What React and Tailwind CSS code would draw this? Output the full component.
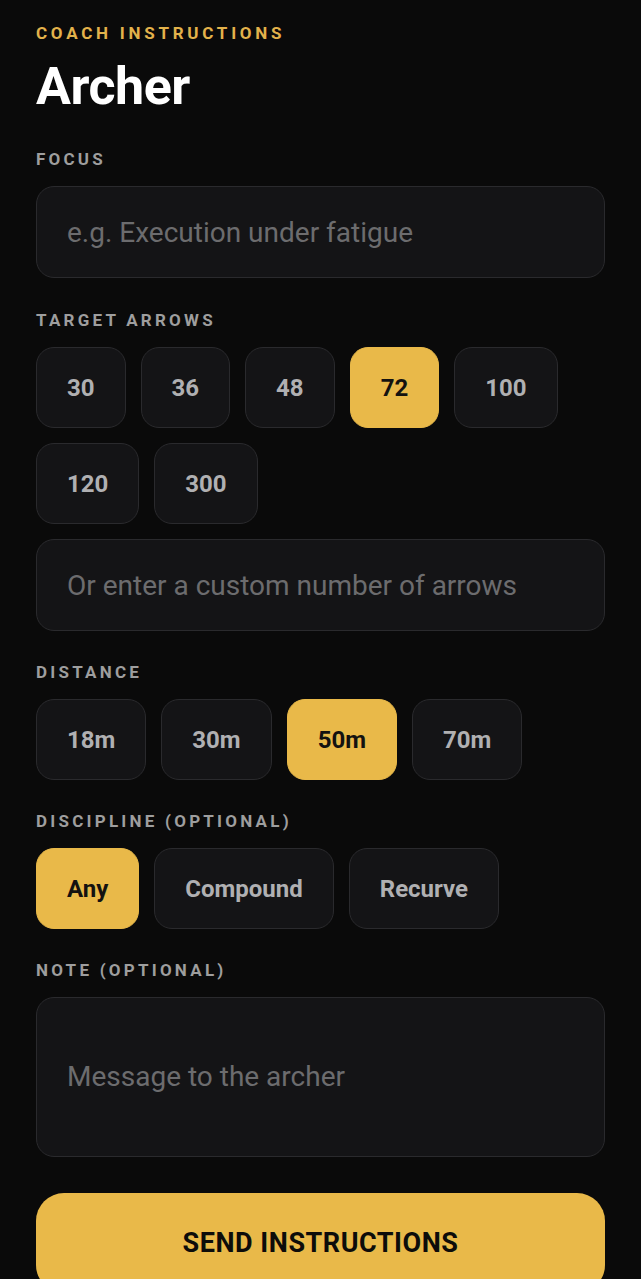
import React, { useState } from 'react';

const ARROWS = ['30', '36', '48', '72', '100', '120', '300'];
const DISTANCES = ['18m', '30m', '50m', '70m'];
const DISCIPLINES = ['Any', 'Compound', 'Recurve'];

const Label = ({ children }) => (
  <div className="text-[17px] leading-none font-bold tracking-[0.19em] text-[#9e9e9e] mb-[18px]">
    {children}
  </div>
);

const Chip = ({ active, children, onClick }) => (
  <button
    type="button"
    onClick={onClick}
    className={
      active
        ? 'h-[81px] px-[30px] rounded-[18px] border border-[#e9b949] bg-[#e9b949] text-[24px] font-bold text-[#141210]'
        : 'h-[81px] px-[30px] rounded-[18px] border border-[#2a2a2d] bg-[#141416] text-[24px] font-bold text-[#b0b0b2]'
    }
  >
    {children}
  </button>
);

const inputClass =
  'w-full h-[92px] rounded-[18px] border border-[#2a2a2d] bg-[#141416] px-[30px] text-[28px] text-[#e5e5e5] placeholder:text-[#6c6c6e] outline-none';

export default function App() {
  const [arrows, setArrows] = useState('72');
  const [distance, setDistance] = useState('50m');
  const [discipline, setDiscipline] = useState('Any');

  return (
    <div
      className="min-h-screen bg-[#0a0a0a] px-[36px] pt-[25px] pb-10"
      style={{ fontFamily: 'Roboto, "Noto Sans", sans-serif' }}
    >
      <div className="text-[17px] leading-none font-bold tracking-[0.22em] text-[#e3b24b]">
        COACH INSTRUCTIONS
      </div>
      <h1 className="mt-[19px] text-[52px] leading-none font-bold text-white tracking-[-0.01em]">
        Archer
      </h1>

      {/* Focus */}
      <div className="mt-[38px]">
        <Label>FOCUS</Label>
        <input className={inputClass} placeholder="e.g. Execution under fatigue" />
      </div>

      {/* Target arrows */}
      <div className="mt-[34px]">
        <Label>TARGET ARROWS</Label>
        <div className="flex flex-wrap gap-[15px]">
          {ARROWS.map((a) => (
            <Chip key={a} active={arrows === a} onClick={() => setArrows(a)}>
              {a}
            </Chip>
          ))}
        </div>
        <input
          className={inputClass + ' mt-[15px]'}
          placeholder="Or enter a custom number of arrows"
        />
      </div>

      {/* Distance */}
      <div className="mt-[33px]">
        <Label>DISTANCE</Label>
        <div className="flex flex-wrap gap-[15px]">
          {DISTANCES.map((d) => (
            <Chip key={d} active={distance === d} onClick={() => setDistance(d)}>
              {d}
            </Chip>
          ))}
        </div>
      </div>

      {/* Discipline */}
      <div className="mt-[33px]">
        <Label>DISCIPLINE (OPTIONAL)</Label>
        <div className="flex flex-wrap gap-[15px]">
          {DISCIPLINES.map((d) => (
            <Chip key={d} active={discipline === d} onClick={() => setDiscipline(d)}>
              {d}
            </Chip>
          ))}
        </div>
      </div>

      {/* Note */}
      <div className="mt-[33px]">
        <Label>NOTE (OPTIONAL)</Label>
        <textarea
          className="block w-full h-[160px] resize-none rounded-[18px] border border-[#2a2a2d] bg-[#141416] px-[30px] pt-[60px] text-[28px] leading-[38px] text-[#e5e5e5] placeholder:text-[#6c6c6e] outline-none"
          placeholder="Message to the archer"
        />
      </div>

      <button
        type="button"
        className="mt-[36px] w-full h-[100px] rounded-[28px] bg-[#e9b949] text-[27px] font-bold tracking-[0.02em] text-[#0d0c0a]"
      >
        SEND INSTRUCTIONS
      </button>
    </div>
  );
}
